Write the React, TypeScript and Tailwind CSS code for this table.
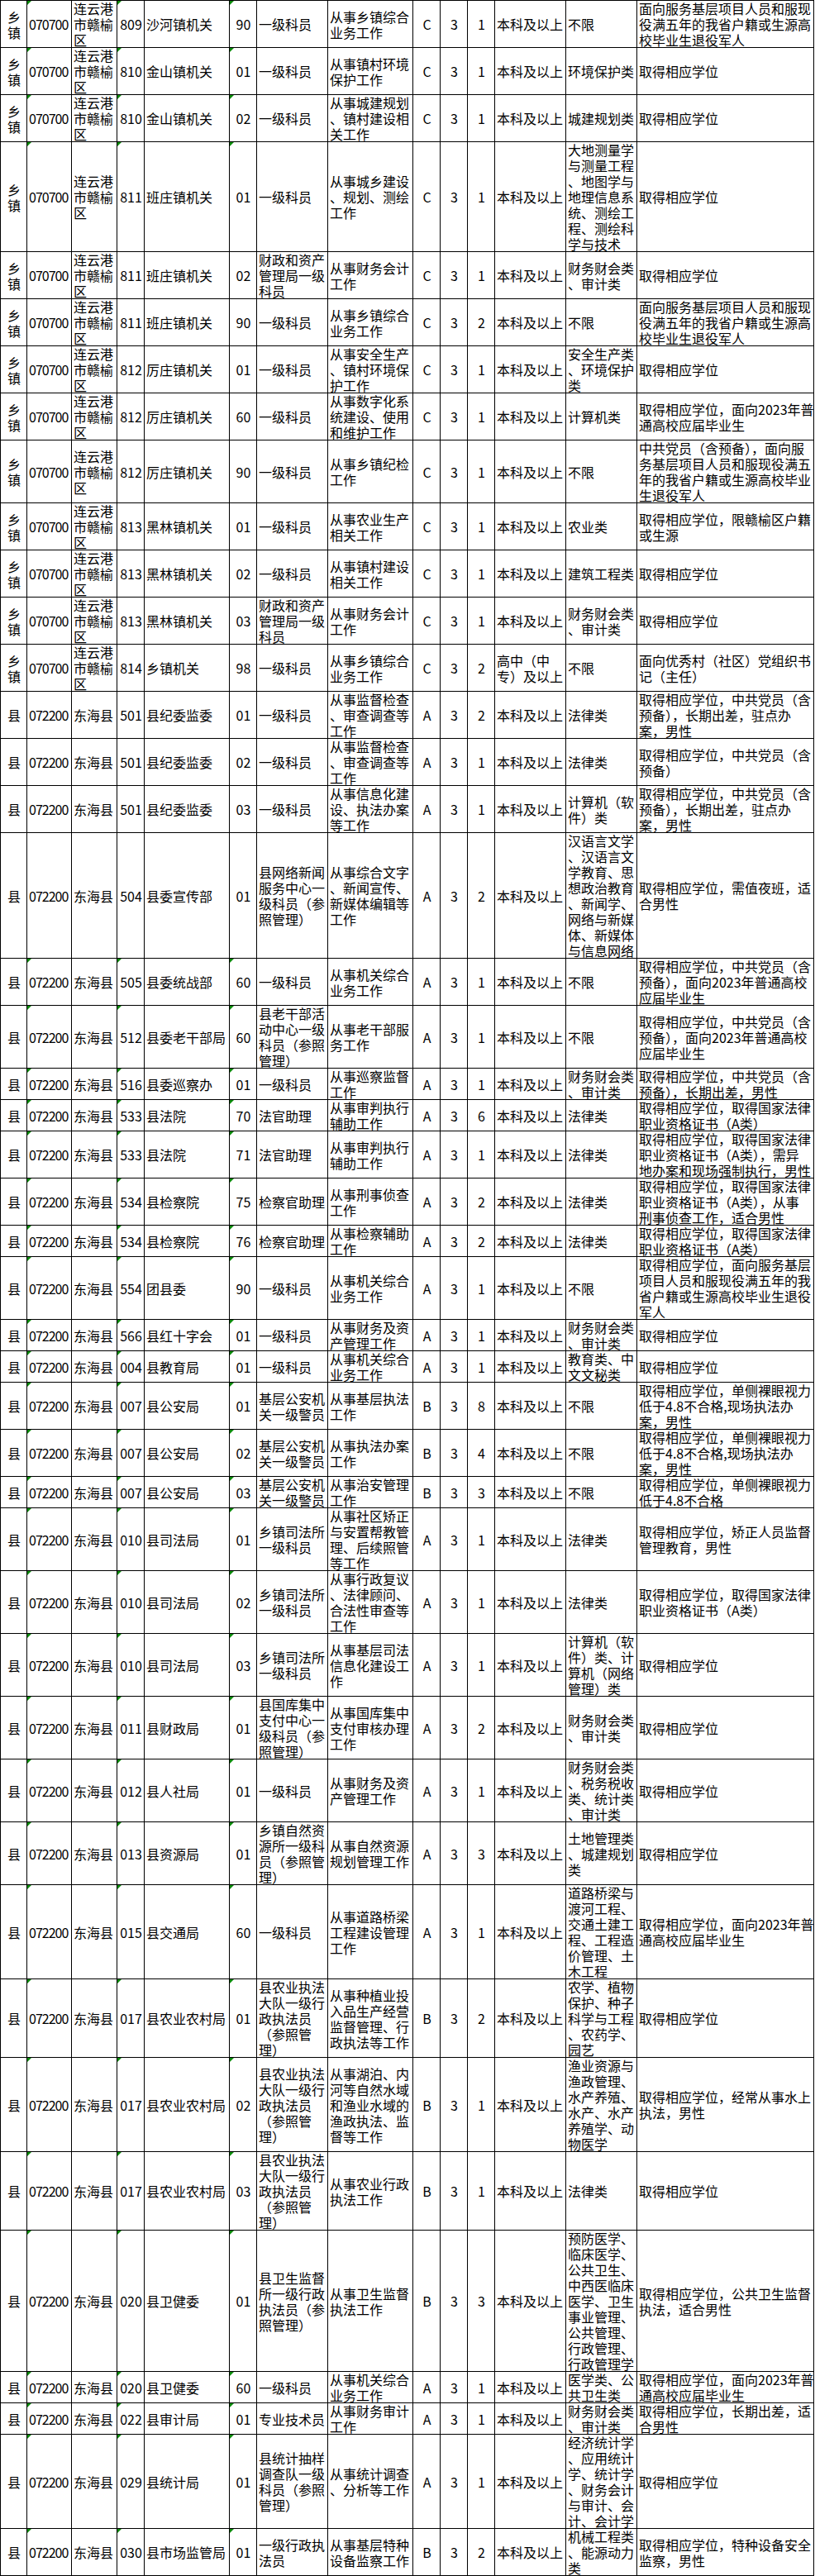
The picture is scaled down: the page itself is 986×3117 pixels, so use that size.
import React from "react";

type Row = { c: string[]; m: boolean };

const XZ = ["乡\n镇", "070700", "连云港\n市赣榆\n区"];
const DH = ["县", "072200", "东海县"];

const r = (p: string[], rest: string[], m: boolean): Row => ({ c: [...p, ...rest], m });

const ROWS: Row[] = [
  r(XZ, ["809", "沙河镇机关", "90", "一级科员", "从事乡镇综合\n业务工作", "C", "3", "1", "本科及以上", "不限", "面向服务基层项目人员和服现\n役满五年的我省户籍或生源高\n校毕业生退役军人"], true),
  r(XZ, ["810", "金山镇机关", "01", "一级科员", "从事镇村环境\n保护工作", "C", "3", "1", "本科及以上", "环境保护类", "取得相应学位"], true),
  r(XZ, ["810", "金山镇机关", "02", "一级科员", "从事城建规划\n、镇村建设相\n关工作", "C", "3", "1", "本科及以上", "城建规划类", "取得相应学位"], true),
  r(XZ, ["811", "班庄镇机关", "01", "一级科员", "从事城乡建设\n、规划、测绘\n工作", "C", "3", "1", "本科及以上", "大地测量学\n与测量工程\n、地图学与\n地理信息系\n统、测绘工\n程、测绘科\n学与技术", "取得相应学位"], true),
  r(XZ, ["811", "班庄镇机关", "02", "财政和资产\n管理局一级\n科员", "从事财务会计\n工作", "C", "3", "1", "本科及以上", "财务财会类\n、审计类", "取得相应学位"], false),
  r(XZ, ["811", "班庄镇机关", "90", "一级科员", "从事乡镇综合\n业务工作", "C", "3", "2", "本科及以上", "不限", "面向服务基层项目人员和服现\n役满五年的我省户籍或生源高\n校毕业生退役军人"], false),
  r(XZ, ["812", "厉庄镇机关", "01", "一级科员", "从事安全生产\n、镇村环境保\n护工作", "C", "3", "1", "本科及以上", "安全生产类\n、环境保护\n类", "取得相应学位"], false),
  r(XZ, ["812", "厉庄镇机关", "60", "一级科员", "从事数字化系\n统建设、使用\n和维护工作", "C", "3", "1", "本科及以上", "计算机类", "取得相应学位，面向2023年普\n通高校应届毕业生"], false),
  r(XZ, ["812", "厉庄镇机关", "90", "一级科员", "从事乡镇纪检\n工作", "C", "3", "1", "本科及以上", "不限", "中共党员（含预备），面向服\n务基层项目人员和服现役满五\n年的我省户籍或生源高校毕业\n生退役军人"], false),
  r(XZ, ["813", "黑林镇机关", "01", "一级科员", "从事农业生产\n相关工作", "C", "3", "1", "本科及以上", "农业类", "取得相应学位，限赣榆区户籍\n或生源"], false),
  r(XZ, ["813", "黑林镇机关", "02", "一级科员", "从事镇村建设\n相关工作", "C", "3", "1", "本科及以上", "建筑工程类", "取得相应学位"], false),
  r(XZ, ["813", "黑林镇机关", "03", "财政和资产\n管理局一级\n科员", "从事财务会计\n工作", "C", "3", "1", "本科及以上", "财务财会类\n、审计类", "取得相应学位"], false),
  r(XZ, ["814", "乡镇机关", "98", "一级科员", "从事乡镇综合\n业务工作", "C", "3", "2", "高中（中\n专）及以上", "不限", "面向优秀村（社区）党组织书\n记（主任）"], false),
  r(DH, ["501", "县纪委监委", "01", "一级科员", "从事监督检查\n、审查调查等\n工作", "A", "3", "2", "本科及以上", "法律类", "取得相应学位，中共党员（含\n预备），长期出差，驻点办\n案，男性"], false),
  r(DH, ["501", "县纪委监委", "02", "一级科员", "从事监督检查\n、审查调查等\n工作", "A", "3", "1", "本科及以上", "法律类", "取得相应学位，中共党员（含\n预备）"], false),
  r(DH, ["501", "县纪委监委", "03", "一级科员", "从事信息化建\n设、执法办案\n等工作", "A", "3", "1", "本科及以上", "计算机（软\n件）类", "取得相应学位，中共党员（含\n预备），长期出差，驻点办\n案，男性"], false),
  r(DH, ["504", "县委宣传部", "01", "县网络新闻\n服务中心一\n级科员（参\n照管理）", "从事综合文字\n、新闻宣传、\n新媒体编辑等\n工作", "A", "3", "2", "本科及以上", "汉语言文学\n、汉语言文\n学教育、思\n想政治教育\n、新闻学、\n网络与新媒\n体、新媒体\n与信息网络", "取得相应学位，需值夜班，适\n合男性"], false),
  r(DH, ["505", "县委统战部", "60", "一级科员", "从事机关综合\n业务工作", "A", "3", "1", "本科及以上", "不限", "取得相应学位，中共党员（含\n预备），面向2023年普通高校\n应届毕业生"], true),
  r(DH, ["512", "县委老干部局", "60", "县老干部活\n动中心一级\n科员（参照\n管理）", "从事老干部服\n务工作", "A", "3", "1", "本科及以上", "不限", "取得相应学位，中共党员（含\n预备），面向2023年普通高校\n应届毕业生"], true),
  r(DH, ["516", "县委巡察办", "01", "一级科员", "从事巡察监督\n工作", "A", "3", "1", "本科及以上", "财务财会类\n、审计类", "取得相应学位，中共党员（含\n预备），长期出差，男性"], true),
  r(DH, ["533", "县法院", "70", "法官助理", "从事审判执行\n辅助工作", "A", "3", "6", "本科及以上", "法律类", "取得相应学位，取得国家法律\n职业资格证书（A类）"], true),
  r(DH, ["533", "县法院", "71", "法官助理", "从事审判执行\n辅助工作", "A", "3", "1", "本科及以上", "法律类", "取得相应学位，取得国家法律\n职业资格证书（A类），需异\n地办案和现场强制执行，男性"], true),
  r(DH, ["534", "县检察院", "75", "检察官助理", "从事刑事侦查\n工作", "A", "3", "2", "本科及以上", "法律类", "取得相应学位，取得国家法律\n职业资格证书（A类），从事\n刑事侦查工作，适合男性"], true),
  r(DH, ["534", "县检察院", "76", "检察官助理", "从事检察辅助\n工作", "A", "3", "2", "本科及以上", "法律类", "取得相应学位，取得国家法律\n职业资格证书（A类）"], true),
  r(DH, ["554", "团县委", "90", "一级科员", "从事机关综合\n业务工作", "A", "3", "1", "本科及以上", "不限", "取得相应学位，面向服务基层\n项目人员和服现役满五年的我\n省户籍或生源高校毕业生退役\n军人"], true),
  r(DH, ["566", "县红十字会", "01", "一级科员", "从事财务及资\n产管理工作", "A", "3", "1", "本科及以上", "财务财会类\n、审计类", "取得相应学位"], true),
  r(DH, ["004", "县教育局", "01", "一级科员", "从事机关综合\n业务工作", "A", "3", "1", "本科及以上", "教育类、中\n文文秘类", "取得相应学位"], true),
  r(DH, ["007", "县公安局", "01", "基层公安机\n关一级警员", "从事基层执法\n工作", "B", "3", "8", "本科及以上", "不限", "取得相应学位，单侧裸眼视力\n低于4.8不合格,现场执法办\n案，男性"], true),
  r(DH, ["007", "县公安局", "02", "基层公安机\n关一级警员", "从事执法办案\n工作", "B", "3", "4", "本科及以上", "不限", "取得相应学位，单侧裸眼视力\n低于4.8不合格,现场执法办\n案，男性"], true),
  r(DH, ["007", "县公安局", "03", "基层公安机\n关一级警员", "从事治安管理\n工作", "B", "3", "3", "本科及以上", "不限", "取得相应学位，单侧裸眼视力\n低于4.8不合格"], true),
  r(DH, ["010", "县司法局", "01", "乡镇司法所\n一级科员", "从事社区矫正\n与安置帮教管\n理、后续照管\n等工作", "A", "3", "1", "本科及以上", "法律类", "取得相应学位，矫正人员监督\n管理教育，男性"], true),
  r(DH, ["010", "县司法局", "02", "乡镇司法所\n一级科员", "从事行政复议\n、法律顾问、\n合法性审查等\n工作", "A", "3", "1", "本科及以上", "法律类", "取得相应学位，取得国家法律\n职业资格证书（A类）"], true),
  r(DH, ["010", "县司法局", "03", "乡镇司法所\n一级科员", "从事基层司法\n信息化建设工\n作", "A", "3", "1", "本科及以上", "计算机（软\n件）类、计\n算机（网络\n管理）类", "取得相应学位"], true),
  r(DH, ["011", "县财政局", "01", "县国库集中\n支付中心一\n级科员（参\n照管理）", "从事国库集中\n支付审核办理\n工作", "A", "3", "2", "本科及以上", "财务财会类\n、审计类", "取得相应学位"], true),
  r(DH, ["012", "县人社局", "01", "一级科员", "从事财务及资\n产管理工作", "A", "3", "1", "本科及以上", "财务财会类\n、税务税收\n类、统计类\n、审计类", "取得相应学位"], true),
  r(DH, ["013", "县资源局", "01", "乡镇自然资\n源所一级科\n员（参照管\n理）", "从事自然资源\n规划管理工作", "A", "3", "3", "本科及以上", "土地管理类\n、城建规划\n类", "取得相应学位"], true),
  r(DH, ["015", "县交通局", "60", "一级科员", "从事道路桥梁\n工程建设管理\n工作", "A", "3", "1", "本科及以上", "道路桥梁与\n渡河工程、\n交通土建工\n程、工程造\n价管理、土\n木工程", "取得相应学位，面向2023年普\n通高校应届毕业生"], true),
  r(DH, ["017", "县农业农村局", "01", "县农业执法\n大队一级行\n政执法员\n（参照管\n理）", "从事种植业投\n入品生产经营\n监督管理、行\n政执法等工作", "B", "3", "2", "本科及以上", "农学、植物\n保护、种子\n科学与工程\n、农药学、\n园艺", "取得相应学位"], true),
  r(DH, ["017", "县农业农村局", "02", "县农业执法\n大队一级行\n政执法员\n（参照管\n理）", "从事湖泊、内\n河等自然水域\n和渔业水域的\n渔政执法、监\n督等工作", "B", "3", "1", "本科及以上", "渔业资源与\n渔政管理、\n水产养殖、\n水产、水产\n养殖学、动\n物医学", "取得相应学位，经常从事水上\n执法，男性"], true),
  r(DH, ["017", "县农业农村局", "03", "县农业执法\n大队一级行\n政执法员\n（参照管\n理）", "从事农业行政\n执法工作", "B", "3", "1", "本科及以上", "法律类", "取得相应学位"], true),
  r(DH, ["020", "县卫健委", "01", "县卫生监督\n所一级行政\n执法员（参\n照管理）", "从事卫生监督\n执法工作", "B", "3", "3", "本科及以上", "预防医学、\n临床医学、\n公共卫生、\n中西医临床\n医学、卫生\n事业管理、\n公共管理、\n行政管理、\n行政管理学", "取得相应学位，公共卫生监督\n执法，适合男性"], true),
  r(DH, ["020", "县卫健委", "60", "一级科员", "从事机关综合\n业务工作", "A", "3", "1", "本科及以上", "医学类、公\n共卫生类", "取得相应学位，面向2023年普\n通高校应届毕业生"], true),
  r(DH, ["022", "县审计局", "01", "专业技术员", "从事财务审计\n工作", "A", "3", "1", "本科及以上", "财务财会类\n、审计类", "取得相应学位，长期出差，适\n合男性"], true),
  r(DH, ["029", "县统计局", "01", "县统计抽样\n调查队一级\n科员（参照\n管理）", "从事统计调查\n、分析等工作", "A", "3", "1", "本科及以上", "经济统计学\n、应用统计\n学、统计学\n、财务会计\n与审计、会\n计、会计学", "取得相应学位"], true),
  r(DH, ["030", "县市场监管局", "01", "一级行政执\n法员", "从事基层特种\n设备监察工作", "B", "3", "2", "本科及以上", "机械工程类\n、能源动力\n类", "取得相应学位，特种设备安全\n监察，男性"], true),
];

const HEIGHTS: Record<number, string> = {
  1: "h-[19px]",
  2: "h-[38px]",
  3: "h-[57px]",
  4: "h-[76px]",
  5: "h-[95px]",
  6: "h-[114px]",
  7: "h-[133px]",
  8: "h-[152px]",
  9: "h-[171px]",
};

const CENTER = [true, false, false, true, false, true, false, false, true, true, true, false, false, false];

function Marker() {
  return (
    <span className="absolute left-0 top-0 h-0 w-0 border-t-[5px] border-r-[5px] border-t-[#0a8a0a] border-r-transparent" />
  );
}

function TableRow({ row }: { row: Row }) {
  const lines = Math.max(...row.c.map((t) => t.split("\n").length));
  return (
    <div
      className={`grid grid-cols-[32px_54px_55px_33px_103px_33px_86px_103px_33px_33px_33px_86px_86px_214px] ${HEIGHTS[lines]}`}
    >
      {row.c.map((text, i) => (
        <div
          key={i}
          className={`relative flex items-center shadow-[inset_-1px_-1px_0_#000] ${
            CENTER[i] ? "justify-center text-center" : "justify-start pl-[2px] text-left"
          }`}
        >
          {row.m && (i === 1 || i === 3 || i === 5) && <Marker />}
          <span className={`whitespace-pre ${i === 1 ? "tracking-[-1px]" : ""}`}>{text}</span>
        </div>
      ))}
    </div>
  );
}

export default function App() {
  return (
    <div className="min-h-[3117px] w-[986px] bg-white font-['Noto_Sans_CJK_SC','Noto_Sans',sans-serif] text-[16px] leading-[19px] text-black">
      <div className="w-[985px] border-t border-l border-black">
        {ROWS.map((row, i) => (
          <TableRow key={i} row={row} />
        ))}
      </div>
    </div>
  );
}
